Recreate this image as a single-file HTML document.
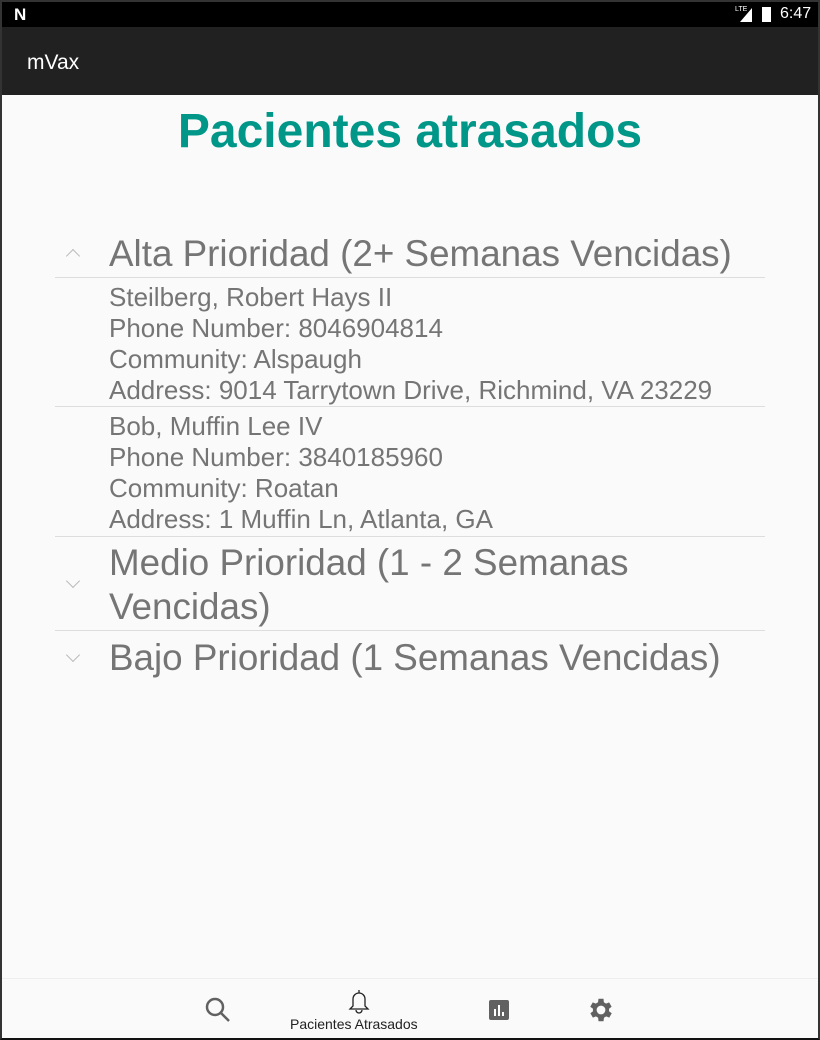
<!DOCTYPE html>
<html><head><meta charset="utf-8"><style>
*{margin:0;padding:0;box-sizing:border-box}
body{width:820px;height:1040px;overflow:hidden;background:#fafafa;font-family:"Liberation Sans",sans-serif;position:relative}
.frame{position:absolute;inset:0;border:2px solid #333;border-bottom:2px solid #111;pointer-events:none}
.sb{position:absolute;left:0;top:0;width:820px;height:27px;background:#000;color:#fff}
.ab{position:absolute;left:0;top:27px;width:820px;height:68px;background:#212121;color:#fff;font-size:21px;padding:24px 0 0 27px}
h1{position:absolute;top:104px;left:0;width:820px;text-align:center;color:#009688;font-size:48px;font-weight:bold}
.hd{position:absolute;left:109px;color:#757575;font-size:36.8px;line-height:44px;white-space:nowrap}
.ln{position:absolute;left:55px;width:710px;height:1px;background:#ddd}
.ch{position:absolute;left:68px;width:10px;height:10px;border-left:1px solid #bbb;border-top:1px solid #bbb}
.dt{position:absolute;left:109px;color:#757575;font-size:26px;line-height:31px;white-space:nowrap}
.nav{position:absolute;left:0;top:978px;width:820px;height:62px;border-top:1px solid #eee;background:#fafafa}
</style></head><body>
<div class="sb">
<div style="position:absolute;left:14px;top:5px;font-weight:bold;font-size:17px">N</div>
<div style="position:absolute;left:735px;top:6px;font-size:7px">LTE</div>
<svg style="position:absolute;left:740px;top:8px" width="12" height="14"><polygon points="12,0 12,14 0,14" fill="#fff"/></svg>
<div style="position:absolute;left:762px;top:7px;width:9px;height:15px;background:#fff"></div>
<div style="position:absolute;left:780px;top:5px;font-size:16px">6:47</div>
</div>
<div class="ab">mVax</div>
<h1>Pacientes atrasados</h1>
<div class="ch" style="top:251px;transform:rotate(45deg)"></div>
<div class="hd" style="top:232px">Alta Prioridad (2+ Semanas Vencidas)</div>
<div class="ln" style="top:277px"></div>
<div class="dt" style="top:282px">Steilberg, Robert Hays II<br>Phone Number: 8046904814<br>Community: Alspaugh<br>Address: 9014 Tarrytown Drive, Richmind, VA 23229</div>
<div class="ln" style="top:406px"></div>
<div class="dt" style="top:411px">Bob, Muffin Lee IV<br>Phone Number: 3840185960<br>Community: Roatan<br>Address: 1 Muffin Ln, Atlanta, GA</div>
<div class="ln" style="top:536px"></div>
<div class="ch" style="top:576px;transform:rotate(225deg)"></div>
<div class="hd" style="top:541px">Medio Prioridad (1 - 2 Semanas<br>Vencidas)</div>
<div class="ln" style="top:630px"></div>
<div class="ch" style="top:650px;transform:rotate(225deg)"></div>
<div class="hd" style="top:636px">Bajo Prioridad (1 Semanas Vencidas)</div>
<div class="nav">
<svg style="position:absolute;left:204px;top:17px" width="28" height="28"><circle cx="11" cy="11" r="8" fill="none" stroke="#616161" stroke-width="2.5"/><line x1="17" y1="17" x2="25" y2="25" stroke="#616161" stroke-width="2.5"/></svg>
<svg style="position:absolute;left:346px;top:9px" width="26" height="28"><path d="M7 18V11a6 6 0 0 1 12 0v7l3 3H4z" fill="none" stroke="#222" stroke-width="1.3"/><path d="M10 22a3 3 0 0 0 6 0" fill="none" stroke="#222" stroke-width="1.3"/><line x1="13" y1="2" x2="13" y2="5" stroke="#222" stroke-width="1.3"/></svg>
<div style="position:absolute;left:290px;top:37px;font-size:14px;color:#222">Pacientes Atrasados</div>
<svg style="position:absolute;left:489px;top:21px" width="20" height="20"><rect width="20" height="20" rx="2" fill="#616161"/><rect x="5" y="9" width="2" height="7" fill="#fff"/><rect x="9" y="5" width="2" height="11" fill="#fff"/><rect x="13" y="12" width="2" height="4" fill="#fff"/></svg>
<svg style="position:absolute;left:586px;top:16px" width="30" height="30" viewBox="0 0 24 24"><path fill="#616161" d="M19.4 13a7.5 7.5 0 0 0 0-2l2.1-1.6-2-3.5-2.5 1a7 7 0 0 0-1.7-1L15 3h-4l-.4 2.9a7 7 0 0 0-1.7 1l-2.5-1-2 3.5L6.6 11a7.5 7.5 0 0 0 0 2l-2.1 1.6 2 3.5 2.5-1a7 7 0 0 0 1.7 1L11 21h4l.4-2.9a7 7 0 0 0 1.7-1l2.5 1 2-3.5zM13 15.5A3.5 3.5 0 1 1 13 8.5a3.5 3.5 0 0 1 0 7z" transform="translate(-1 0)"/></svg>
</div>
<div class="frame"></div>
</body></html>
